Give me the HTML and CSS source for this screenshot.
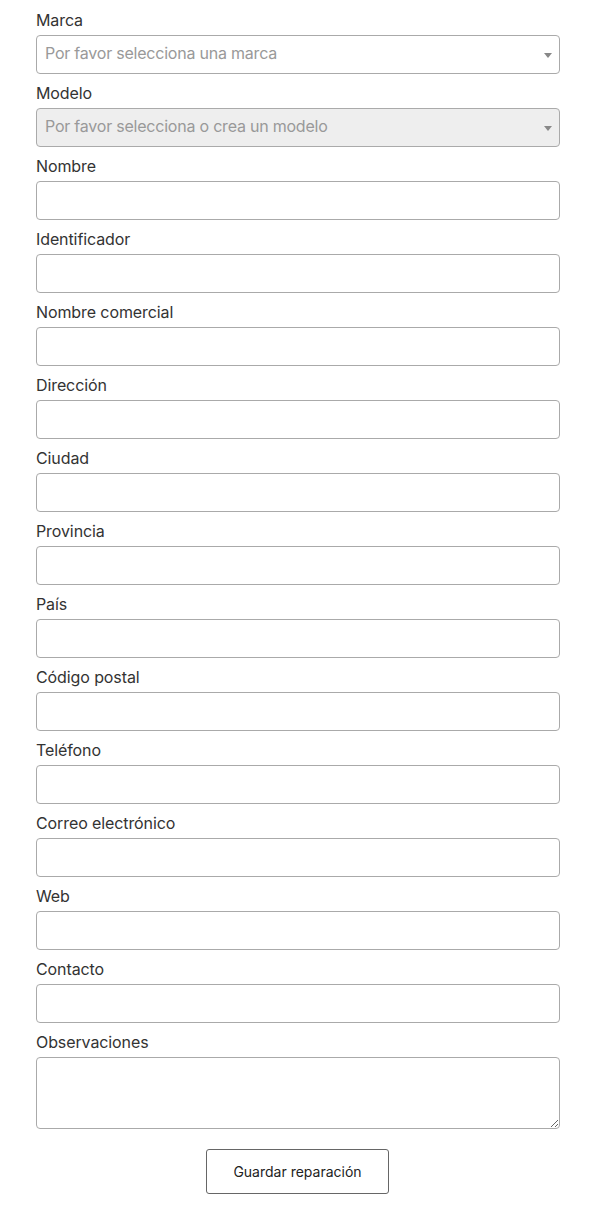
FILE: index.html
```html
<!DOCTYPE html>
<html lang="es">
<head>
<meta charset="utf-8">
<link rel="stylesheet" href="styles.css">
</head>
<body>
<form class="form">
  <div class="field">
    <label class="label">Marca</label>
    <div class="select"><span class="placeholder">Por favor selecciona una marca</span><span class="arrow"></span></div>
  </div>
  <div class="field">
    <label class="label">Modelo</label>
    <div class="select disabled"><span class="placeholder">Por favor selecciona o crea un modelo</span><span class="arrow"></span></div>
  </div>
  <div class="field"><label class="label">Nombre</label><input class="input" type="text"></div>
  <div class="field"><label class="label">Identificador</label><input class="input" type="text"></div>
  <div class="field"><label class="label">Nombre comercial</label><input class="input" type="text"></div>
  <div class="field"><label class="label">Dirección</label><input class="input" type="text"></div>
  <div class="field"><label class="label">Ciudad</label><input class="input" type="text"></div>
  <div class="field"><label class="label">Provincia</label><input class="input" type="text"></div>
  <div class="field"><label class="label">País</label><input class="input" type="text"></div>
  <div class="field"><label class="label">Código postal</label><input class="input" type="text"></div>
  <div class="field"><label class="label">Teléfono</label><input class="input" type="text"></div>
  <div class="field"><label class="label">Correo electrónico</label><input class="input" type="text"></div>
  <div class="field"><label class="label">Web</label><input class="input" type="text"></div>
  <div class="field"><label class="label">Contacto</label><input class="input" type="text"></div>
  <div class="field"><label class="label">Observaciones</label><textarea class="textarea"></textarea></div>
  <div class="actions"><button type="button" class="button">Guardar reparación</button></div>
</form>
</body>
</html>
```
FILE: styles.css
```css
html, body {
  margin: 0;
  padding: 0;
  background: #fff;
}
body {
  font-family: "Inter", "Lato", sans-serif;
  color: #333;
}
.form {
  width: 524px;
  margin: 0 0 0 36px;
  padding-top: 1px;
  display: flex;
  flex-direction: column;
}
.field {
  display: flex;
  flex-direction: column;
  margin-top: 7px;
}
.label {
  font-size: 16px;
  line-height: 24px;
  height: 24px;
  margin-bottom: 3px;
  color: #333;
  letter-spacing: -0.1px;
}
.select, .input {
  box-sizing: border-box;
  height: 39px;
  width: 100%;
  border: 1px solid #aaa;
  border-radius: 4px;
  background: #fff;
  font-family: inherit;
  font-size: 16px;
  margin: 0;
}
.select {
  position: relative;
  display: flex;
  align-items: center;
  padding: 0 8px;
}
.select.disabled {
  background: #eee;
}
.placeholder {
  color: #999;
  font-size: 16px;
  line-height: 24px;
  margin-top: -3px;
  letter-spacing: -0.22px;
}
.arrow {
  position: absolute;
  right: 7px;
  top: 17px;
  width: 0;
  height: 0;
  border-left: 4px solid transparent;
  border-right: 4px solid transparent;
  border-top: 5px solid #888;
}
.textarea {
  box-sizing: border-box;
  width: 100%;
  height: 72px;
  border: 1px solid #aaa;
  border-radius: 4px;
  margin: 0;
  font-family: inherit;
  font-size: 16px;
  resize: vertical;
}
.actions {
  display: flex;
  justify-content: center;
  margin-top: 20px;
  padding-right: 1px;
}
.button {
  width: 183px;
  height: 45px;
  border: 1px solid #666;
  border-radius: 3px;
  background: #fff;
  color: #222;
  font-family: inherit;
  font-size: 14px;
  cursor: pointer;
}
```
